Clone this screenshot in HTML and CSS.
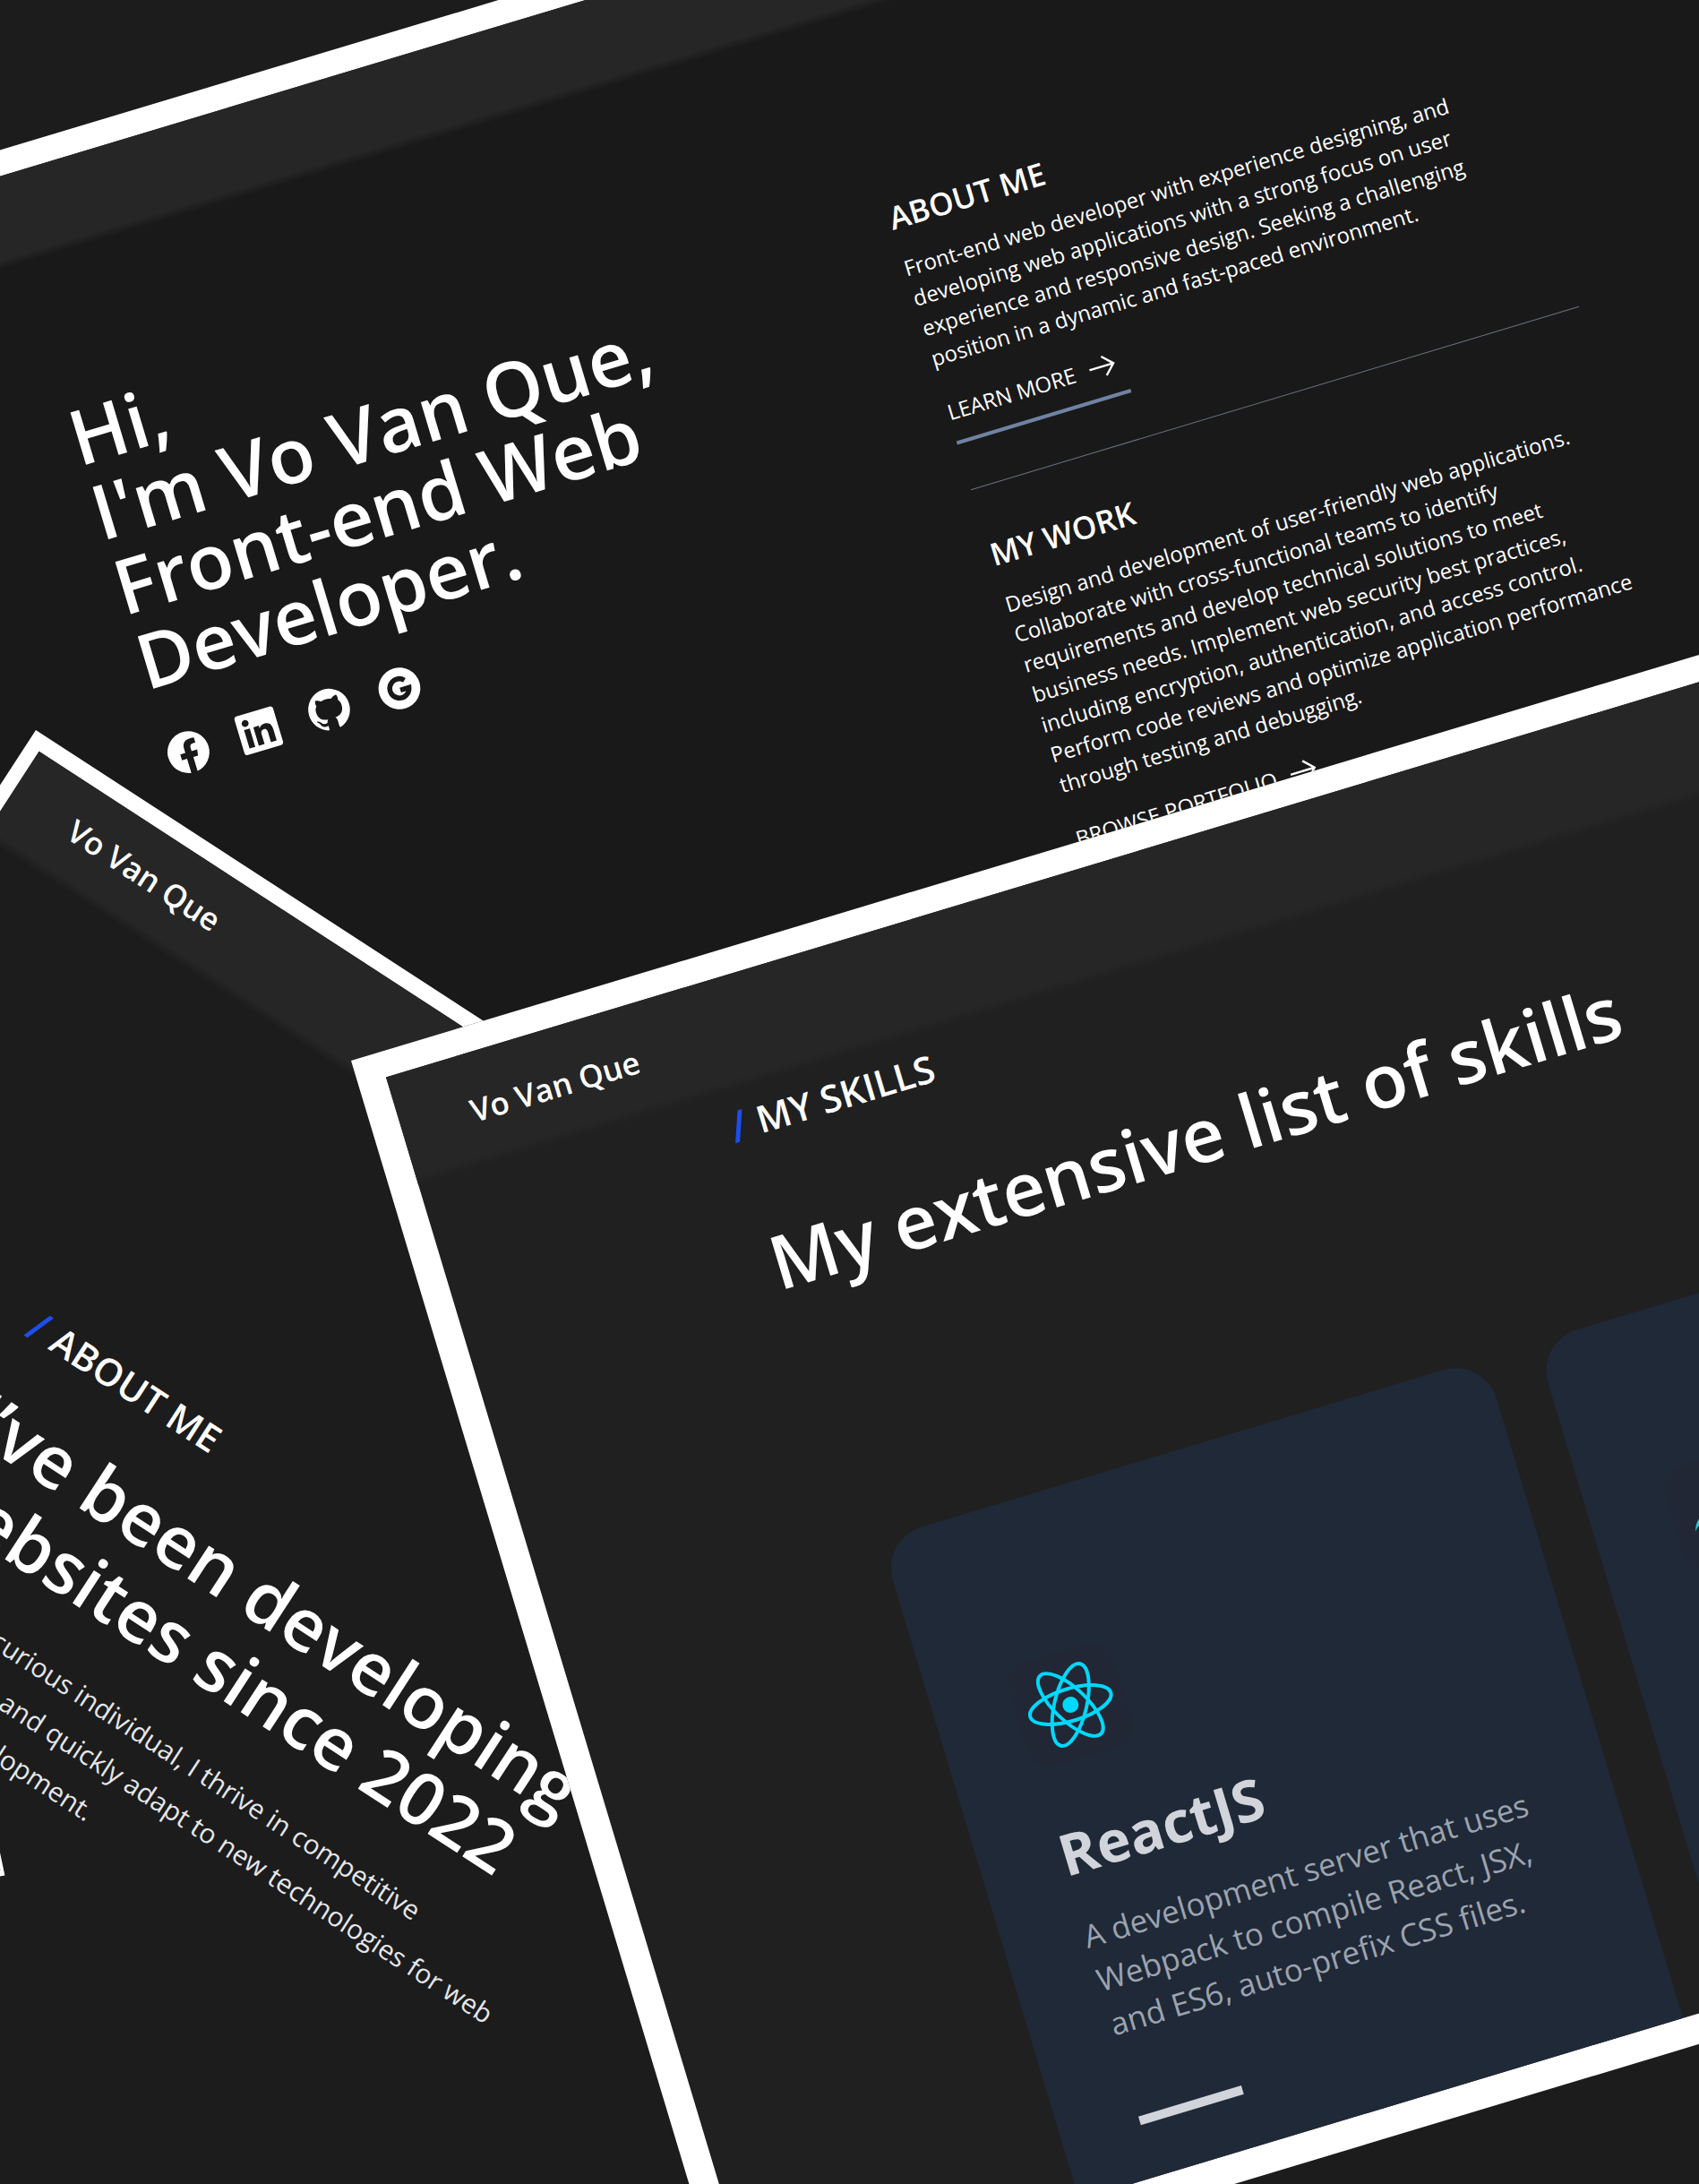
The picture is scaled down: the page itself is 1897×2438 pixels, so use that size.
FILE: index.html
```html
<!DOCTYPE html>
<html lang="en">
<head>
  <meta charset="utf-8">
  <meta name="viewport" content="width=device-width, initial-scale=1">
  <title>Vo Van Que – Front-end Web Developer</title>
  <link rel="stylesheet" href="styles.css">
</head>
<body>
  <main class="stage">

    <section class="window window-home">
      <header class="bar"></header>
      <div class="home">
        <div class="hero">
          <h1 class="hero-title">Hi,<br>I'm Vo Van Que,<br>Front-end Web<br>Developer.</h1>
          <nav class="social" aria-label="Social profiles">
            <a href="#" aria-label="Facebook"><svg class="social-icon" viewBox="0 0 24 24"><path d="M12 2.04C6.5 2.04 2 6.53 2 12.06C2 17.06 5.66 21.21 10.44 21.96V14.96H7.9V12.06H10.44V9.85C10.44 7.34 11.93 5.96 14.22 5.96C15.31 5.96 16.45 6.15 16.45 6.15V8.62H15.19C13.95 8.62 13.56 9.39 13.56 10.18V12.06H16.34L15.89 14.96H13.56V21.96A10 10 0 0 0 22 12.06C22 6.53 17.5 2.04 12 2.04Z"/></svg></a>
            <a href="#" aria-label="LinkedIn"><svg class="social-icon" viewBox="-55 -23 558 558"><path d="M416 32H31.9C14.3 32 0 46.5 0 64.3v383.4C0 465.5 14.3 480 31.9 480H416c17.6 0 32-14.5 32-32.3V64.3c0-17.8-14.4-32.3-32-32.3zM135.4 416H69V202.2h66.5V416zm-33.2-243c-21.3 0-38.5-17.3-38.5-38.5S80.9 96 102.2 96c21.2 0 38.5 17.3 38.5 38.5 0 21.3-17.2 38.5-38.5 38.5zm282.1 243h-66.4V312c0-24.8-.5-56.7-34.5-56.7-34.6 0-39.9 27-39.9 54.9V416h-66.4V202.2h63.7v29.2h.9c8.9-16.8 30.6-34.5 62.9-34.5 67.2 0 79.7 44.3 79.7 101.9V416z"/></svg></a>
            <a href="#" aria-label="GitHub"><svg class="social-icon" viewBox="0 0 24 24"><path d="M12,2A10,10 0 0,0 2,12C2,16.42 4.87,20.17 8.84,21.5C9.34,21.58 9.5,21.27 9.5,21C9.5,20.77 9.5,20.14 9.5,19.31C6.73,19.91 6.14,17.97 6.14,17.97C5.68,16.81 5.03,16.5 5.03,16.5C4.12,15.88 5.1,15.9 5.1,15.9C6.1,15.97 6.63,16.93 6.63,16.93C7.5,18.45 8.97,18 9.54,17.76C9.63,17.11 9.89,16.67 10.17,16.42C7.95,16.17 5.62,15.31 5.62,11.5C5.62,10.39 6,9.5 6.65,8.79C6.55,8.54 6.2,7.5 6.75,6.15C6.75,6.15 7.59,5.88 9.5,7.17C10.29,6.95 11.15,6.84 12,6.84C12.85,6.84 13.71,6.95 14.5,7.17C16.41,5.88 17.25,6.15 17.25,6.15C17.8,7.5 17.45,8.54 17.35,8.79C18,9.5 18.38,10.39 18.38,11.5C18.38,15.32 16.04,16.16 13.81,16.41C14.17,16.72 14.5,17.33 14.5,18.26C14.5,19.6 14.5,20.68 14.5,21C14.5,21.27 14.66,21.59 15.17,21.5C19.14,20.16 22,16.42 22,12A10,10 0 0,0 12,2Z"/></svg></a>
            <a href="#" aria-label="Google"><svg class="social-icon" viewBox="0 0 24 24"><circle cx="12" cy="12" r="10"/><path class="google-g" d="M15.4 8.9A4.6 4.6 0 1 0 16.5 12.9H12.2"/></svg></a>
          </nav>
        </div>
        <div class="intro">
          <article class="intro-item">
            <h2 class="intro-title">ABOUT ME</h2>
            <p class="intro-text">Front-end web developer with experience designing, and developing web applications with a strong focus on user experience and responsive design. Seeking a challenging position in a dynamic and fast-paced environment.</p>
            <a class="more" href="#">LEARN MORE <svg class="more-arrow" viewBox="0 0 30 24"><path d="M0 12H28M17 1L28 12L17 23"/></svg></a>
          </article>
          <hr class="rule">
          <article class="intro-item">
            <h2 class="intro-title">MY WORK</h2>
            <p class="intro-text">Design and development of user-friendly web applications. Collaborate with cross-functional teams to identify requirements and develop technical solutions to meet business needs. Implement web security best practices, including encryption, authentication, and access control. Perform code reviews and optimize application performance through testing and debugging.</p>
            <a class="more" href="#">BROWSE PORTFOLIO <svg class="more-arrow" viewBox="0 0 30 24"><path d="M0 12H28M17 1L28 12L17 23"/></svg></a>
          </article>
        </div>
      </div>
    </section>

    <section class="window window-about">
      <header class="bar"><a class="brand" href="#">Vo Van Que</a></header>
      <div class="about">
        <h2 class="eyebrow"><span class="slash">/</span>ABOUT ME</h2>
        <p class="headline">I’ve been developing websites since 2022</p>
        <p class="about-text">As a highly curious individual, I thrive in competitive environments and quickly adapt to new technologies for web application development.</p>
        <a class="about-link" href="#">MY PORTFOLIO <svg class="about-arrow" viewBox="0 0 30 24"><path d="M0 12H28M17 1L28 12L17 23"/></svg></a>
      </div>
    </section>

    <section class="window window-skills">
      <header class="bar"><a class="brand" href="#">Vo Van Que</a></header>
      <div class="skills">
        <h2 class="eyebrow"><span class="slash">/</span>MY SKILLS</h2>
        <p class="headline">My extensive list of skills</p>
        <div class="cards">
          <article class="card">
            <div class="tile">
              <svg class="react" viewBox="-50 -50 100 100">
                <circle r="9"/>
                <g class="orbits"><ellipse rx="47" ry="18"/><ellipse rx="47" ry="18" transform="rotate(60)"/><ellipse rx="47" ry="18" transform="rotate(120)"/></g>
              </svg>
            </div>
            <h3 class="card-title">ReactJS</h3>
            <p class="card-text">A development server that uses Webpack to compile React, JSX, and ES6, auto-prefix CSS files.</p>
            <div class="dash"></div>
          </article>
          <article class="card">
            <div class="tile">
              <svg class="tailwind" viewBox="0 0 24 24"><path d="M12 6C9.33 6 7.67 7.33 7 10C8 8.67 9.17 8.17 10.5 8.5C11.26 8.69 11.81 9.24 12.41 9.85C13.39 10.85 14.5 12 17 12C19.67 12 21.33 10.67 22 8C21 9.33 19.83 9.83 18.5 9.5C17.74 9.31 17.2 8.76 16.59 8.15C15.61 7.15 14.5 6 12 6M7 12C4.33 12 2.67 13.33 2 16C3 14.67 4.17 14.17 5.5 14.5C6.26 14.69 6.8 15.24 7.41 15.85C8.39 16.85 9.5 18 12 18C14.67 18 16.33 16.67 17 14C16 15.33 14.83 15.83 13.5 15.5C12.74 15.31 12.2 14.76 11.59 14.15C10.61 13.15 9.5 12 7 12Z"/></svg>
            </div>
          </article>
        </div>
      </div>
    </section>

  </main>
</body>
</html>
```
FILE: styles.css
```css
* {
  box-sizing: border-box;
}

body {
  margin: 0;
  background: #1c1c1c;
  color: #fff;
  font-family: "Open Sans", "Noto Sans", sans-serif;
}

h1, h2, h3, p {
  margin: 0;
}

a {
  color: inherit;
  text-decoration: none;
}

.stage {
  position: relative;
  min-height: 100vh;
  overflow: hidden;
}

/* Tilted browser windows, pinned by their top left corner */
.window {
  position: absolute;
  transform-origin: 0 0;
  border-style: solid;
  border-color: #fff;
  background: var(--page);
}

.window-home {
  --page: #191919;
  left: -500px;
  top: 318px;
  width: 140%;
  border-width: 28px 32px 32px;
  transform: rotate(-16.75deg);
}

.window-about {
  --page: #1c1c1c;
  left: 40px;
  top: 815px;
  width: 90%;
  border-width: 18px 16px 16px;
  transform: rotate(33deg);
}

.window-skills {
  --page: #202020;
  left: 392px;
  top: 1184px;
  width: 120%;
  border-width: 29px 32px 33px;
  transform: rotate(-16.75deg);
}

.bar {
  display: flex;
  align-items: center;
  background: linear-gradient(#262626 90%, var(--page));
}

.window-home .bar {
  height: 100px;
}

.window-about .bar {
  height: 114px;
  padding: 0 76px 12px;
}

.window-skills .bar {
  height: 126px;
  padding: 0 80px;
}

.brand {
  font-size: 35px;
  font-weight: 600;
}

/* Home */
.home {
  display: grid;
  grid-template-columns: 946px 709px;
  align-items: start;
  padding: 160px 0 320px 473px;
}

.hero-title {
  font-size: 85px;
  font-weight: 600;
  line-height: 87px;
}

.social {
  display: flex;
  gap: 26px;
  margin: 40px 0 0 -3px;
}

.social-icon {
  display: block;
  width: 56px;
  height: 56px;
  fill: #fff;
}

.google-g {
  fill: none;
  stroke: #191919;
  stroke-width: 2.4;
}

.intro {
  padding-top: 48px;
}

.intro-title {
  margin-bottom: 16px;
  font-size: 35px;
  font-weight: 600;
  line-height: 48px;
}

.intro-text {
  max-width: 700px;
  margin-bottom: 28px;
  font-size: 24px;
  line-height: 35px;
}

.more {
  display: inline-flex;
  align-items: center;
  gap: 16px;
  padding-right: 8px;
  padding-bottom: 15px;
  border-bottom: 4px solid #6f83a3;
  font-size: 24px;
  line-height: 36px;
}

.more-arrow {
  width: 30px;
  height: 24px;
  fill: none;
  stroke: #fff;
  stroke-width: 2.4;
}

.rule {
  height: 1px;
  margin: 52px 0;
  border: 0;
  background: #6b7280;
}

/* Shared section headings */
.eyebrow {
  display: flex;
  gap: 12px;
  font-size: 42px;
  font-weight: 600;
  line-height: 48px;
}

.slash {
  color: #1d4eed;
  font-size: 48px;
}

.headline {
  font-size: 83px;
  font-weight: 600;
  line-height: 93px;
}

/* About */
.about {
  padding: 400px 0 300px 340px;
}

.about .headline {
  max-width: 900px;
  margin-top: 44px;
  font-size: 81px;
}

.about-text {
  max-width: 880px;
  margin-top: 38px;
  color: #e5e7eb;
  font-size: 30px;
  line-height: 53px;
}

.about-link {
  display: inline-flex;
  align-items: center;
  gap: 36px;
  margin-top: 60px;
  font-size: 32px;
  line-height: 48px;
}

.about-arrow {
  width: 48px;
  height: 38px;
  fill: none;
  stroke: #fff;
  stroke-width: 2.4;
}

/* Skills */
.skills {
  padding: 15px 0 0 352px;
}

.skills .headline {
  margin-top: 87px;
}

.cards {
  display: flex;
  gap: 60px;
  margin: 284px 0 0 28px;
}

.card {
  flex: none;
  width: 704px;
  padding: 178px 72px 60px 90px;
  border-radius: 48px 48px 0 0;
  background: #1f2937;
}

.tile {
  display: grid;
  place-items: center;
  width: 120px;
  height: 120px;
  border-radius: 24px;
  background: #222735;
}

.react {
  width: 100px;
  height: 100px;
  fill: #00d8ff;
}

.orbits {
  fill: none;
  stroke: #00d8ff;
  stroke-width: 4;
}

.tailwind {
  width: 96px;
  height: 96px;
  fill: #2cc5c9;
}

.card-title {
  margin-top: 59px;
  color: #d1d5db;
  font-size: 64px;
  font-weight: 700;
  line-height: 80px;
}

.card-text {
  margin-top: 28px;
  color: #9ca3af;
  font-size: 35px;
  line-height: 51px;
}

.dash {
  width: 120px;
  height: 10px;
  margin-top: 82px;
  background: #d1d5db;
}
```
